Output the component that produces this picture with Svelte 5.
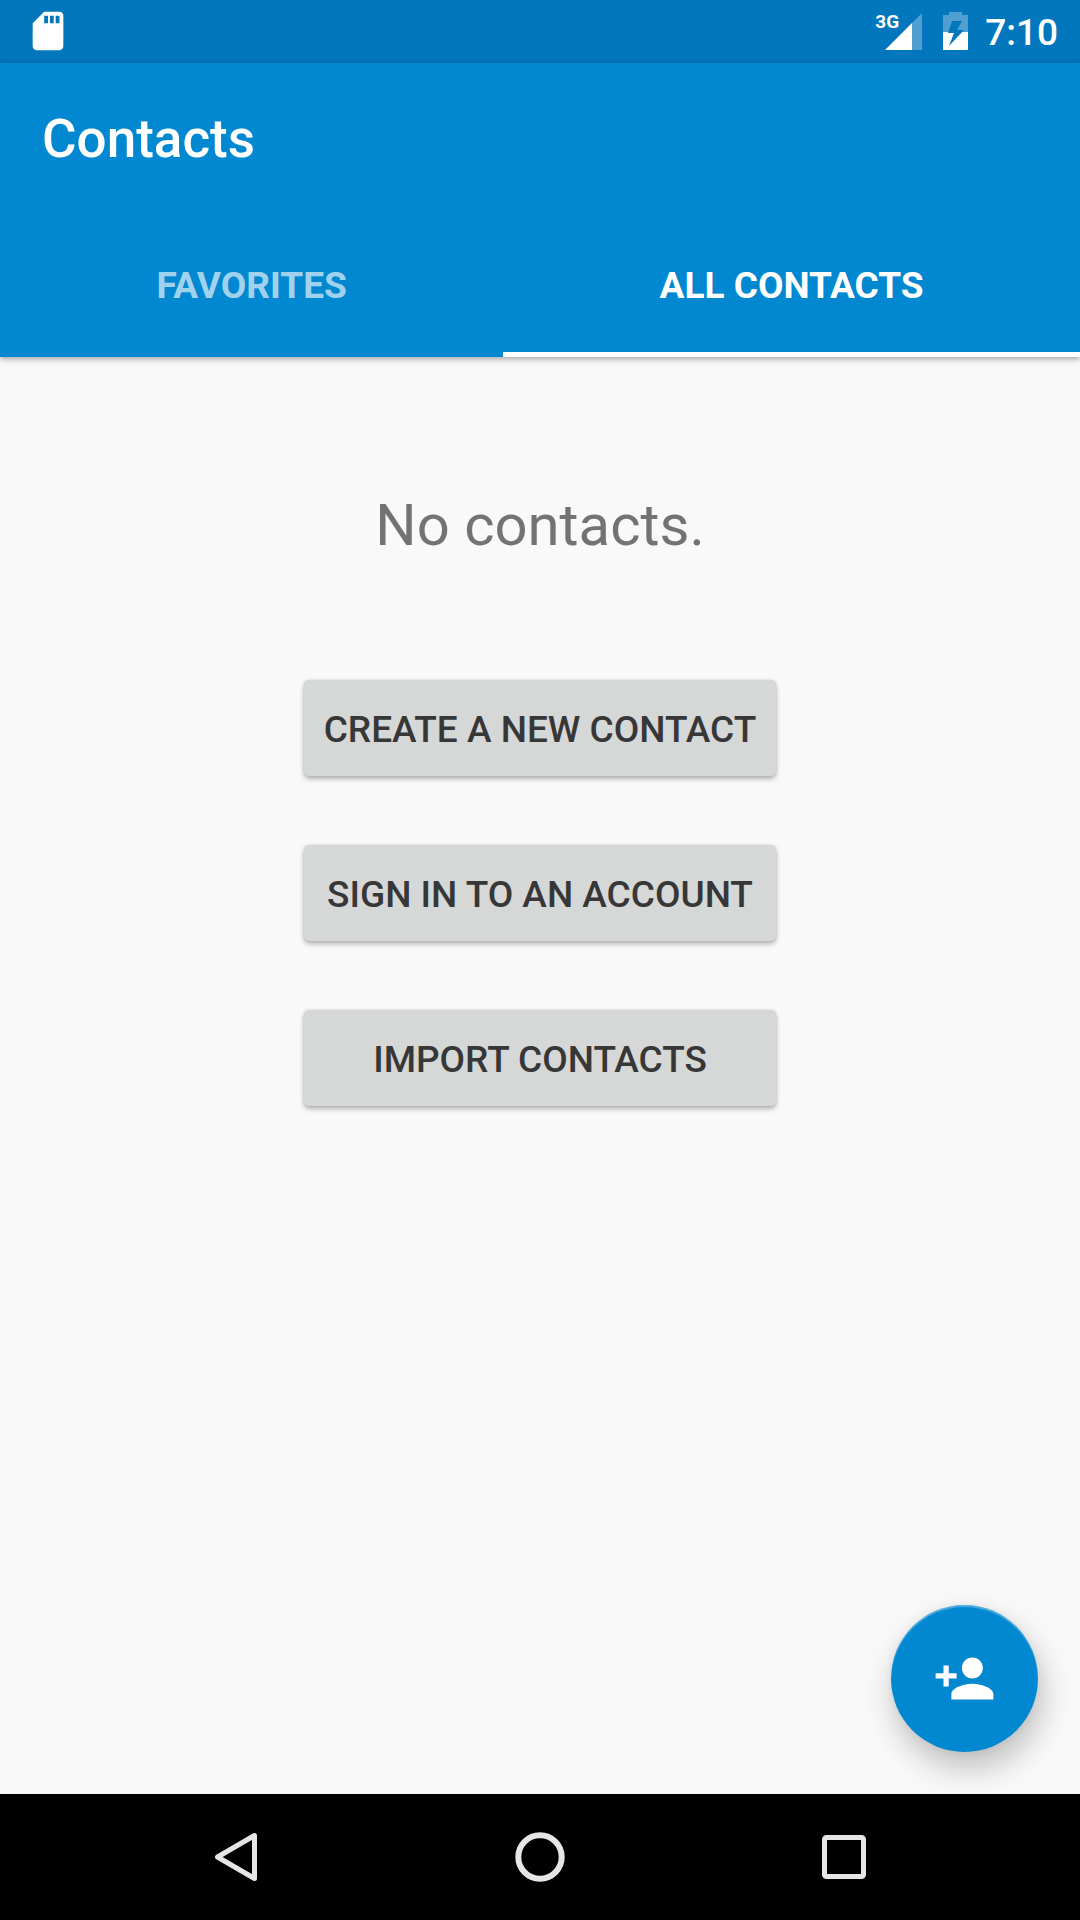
<script>
  const tabs = ['Favorites', 'All contacts'];
  const actions = ['Create a new contact', 'Sign in to an account', 'Import contacts'];
  let selected = $state('All contacts');
</script>

<div class="screen">
  <div class="status">
    <svg class="sd" viewBox="0 0 24 24" aria-hidden="true">
      <path d="M18 2h-8L4.02 8 4 20c0 1.1.9 2 2 2h12c1.1 0 2-.9 2-2V4c0-1.1-.9-2-2-2zm-6 6h-2V4h2v4zm3 0h-2V4h2v4zm3 0h-2V4h2v4z" />
    </svg>
    <div class="signal">
      <span class="network">3G</span>
      <svg class="bars" viewBox="0 0 37 37" aria-hidden="true">
        <path class="dim" d="M37 0V37H27V10z" />
        <path d="M0 37L27 10V37z" />
      </svg>
    </div>
    <svg class="battery" viewBox="0 0 25 38" aria-hidden="true">
      <path class="dim" d="M6 0H19V3H25V20H0V3H6z" />
      <path d="M0 20H25V38H0z" />
      <path class="bolt" d="M9 9H19L14 18H21L6 34L11 21H5z" />
    </svg>
    <time class="clock">7:10</time>
  </div>

  <header>
    <h1>Contacts</h1>
    <div class="tabs" role="tablist">
      {#each tabs as tab}
        <button
          class="tab"
          class:active={selected === tab}
          role="tab"
          aria-selected={selected === tab}
          onclick={() => (selected = tab)}>{tab}</button>
      {/each}
    </div>
  </header>

  <main>
    <p>No contacts.</p>
    <div class="actions">
      {#each actions as action}
        <button class="action">{action}</button>
      {/each}
    </div>
    <button class="fab" aria-label="Add contact">
      <svg viewBox="0 0 24 24" aria-hidden="true">
        <path d="M15 12c2.21 0 4-1.79 4-4s-1.79-4-4-4-4 1.79-4 4 1.79 4 4 4zm-9-2V7H4v3H1v2h3v3h2v-3h3v-2H6zm9 4c-2.67 0-8 1.34-8 4v2h16v-2c0-2.66-5.33-4-8-4z" />
      </svg>
    </button>
  </main>

  <nav>
    <button aria-label="Back">
      <svg viewBox="0 0 64 64" aria-hidden="true"><path d="M50.5 10.500V53.500L13.500 32z" stroke-width="5" stroke-linejoin="round" /></svg>
    </button>
    <button aria-label="Home">
      <svg viewBox="0 0 64 64" aria-hidden="true"><circle cx="32" cy="32" r="21.700" stroke-width="6" /></svg>
    </button>
    <button aria-label="Recent apps">
      <svg viewBox="0 0 64 64" aria-hidden="true"><rect x="12.500" y="12.500" width="39" height="39" rx="2" stroke-width="5" /></svg>
    </button>
  </nav>
</div>

<style>
  :global(body) {
    margin: 0;
  }

  .screen {
    display: flex;
    flex-direction: column;
    min-height: 100vh;
    background: #f9f9f9;
    font-family: Roboto, "Noto Sans", sans-serif;
  }

  button {
    margin: 0;
    border: 0;
    font-family: inherit;
    cursor: pointer;
  }

  svg {
    display: block;
    flex: none;
  }

  .status {
    display: flex;
    align-items: center;
    box-sizing: border-box;
    height: 63px;
    padding: 0 22px 1px 25px;
    background: #0277bd;
    color: #fff;
    fill: #fff;
  }

  .sd {
    width: 46px;
    height: 46px;
    margin-right: auto;
  }

  .signal {
    display: flex;
    align-items: flex-start;
    margin-right: 21px;
  }

  .network {
    margin-right: -14px;
    font-size: 19px;
    line-height: 18px;
    font-weight: 700;
  }

  .bars {
    width: 37px;
    height: 37px;
  }

  .dim {
    fill: #4fa0d1;
  }

  .battery {
    width: 25px;
    height: 38px;
    margin-right: 17px;
  }

  .bolt {
    fill: #0277bd;
  }

  .clock {
    padding-top: 4px;
    font-size: 37px;
    line-height: 44px;
    font-weight: 500;
  }

  header {
    position: relative;
    background: #0288d1;
    color: #fff;
    box-shadow: 0 2px 6px rgba(0, 0, 0, 0.35);
  }

  h1 {
    margin: 0;
    padding: 44px 42px 39px;
    font-size: 53px;
    line-height: 64px;
    font-weight: 500;
  }

  .tabs {
    display: flex;
  }

  .tab {
    flex: 1 1 auto;
    height: 147px;
    padding: 9px 0 0;
    border-bottom: 5px solid transparent;
    background: none;
    color: rgba(255, 255, 255, 0.65);
    font-size: 37px;
    line-height: 44px;
    font-weight: 700;
    text-transform: uppercase;
  }

  .active {
    border-color: #fff;
    color: #fff;
  }

  main {
    position: relative;
    flex: 1;
    display: flex;
    flex-direction: column;
    align-items: center;
    padding: 133px 42px 42px;
  }

  p {
    margin: 0 0 120px;
    color: #737373;
    font-size: 58px;
    line-height: 70px;
  }

  .actions {
    display: grid;
    gap: 69px;
  }

  .action {
    height: 96px;
    padding: 4px 20px 0;
    border-radius: 5px;
    background: #d6d7d7;
    box-shadow: 0 3px 5px rgba(0, 0, 0, 0.28), 0 0 3px rgba(0, 0, 0, 0.12);
    color: #373737;
    font-size: 37px;
    line-height: 44px;
    font-weight: 500;
    text-transform: uppercase;
  }

  .fab {
    position: absolute;
    right: 42px;
    bottom: 42px;
    display: grid;
    place-items: center;
    width: 147px;
    height: 147px;
    padding: 0;
    border-radius: 50%;
    background: #0288d1;
    box-shadow:
      inset 0 2px 1px rgba(255, 255, 255, 0.3),
      4px 16px 32px rgba(0, 0, 0, 0.24),
      0 0 8px rgba(0, 0, 0, 0.06);
    fill: #fff;
  }

  .fab svg {
    width: 63px;
    height: 63px;
  }

  nav {
    position: relative;
    display: flex;
    height: 126px;
    padding: 0 84px;
    background: #000;
  }

  nav button {
    flex: 1;
    display: grid;
    place-items: center;
    padding: 0;
    background: none;
  }

  nav svg {
    width: 64px;
    height: 64px;
    fill: none;
    stroke: #e6e6e6;
  }
</style>
